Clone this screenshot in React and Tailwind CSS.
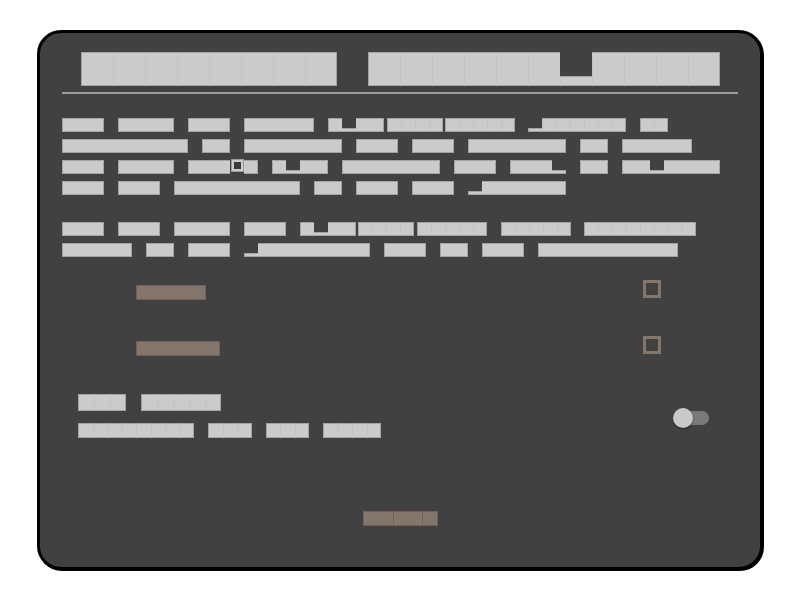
import clsx from "clsx";

// cell sizes for each "redacted" text style
const sizes = {
  sm: { cell: "w-[14px]", full: "h-[14px]", low: "h-[4px]", row: "h-[14px]" },
  md: { cell: "w-[16px]", full: "h-[17px]", low: "h-[5px]", row: "h-[17px]" },
  sub: { cell: "w-[14.5px]", full: "h-[15px]", low: "h-[4px]", row: "h-[15px]" },
  lg: { cell: "w-[32px]", full: "h-[34px]", low: "h-[10px]", row: "h-[34px]" },
};

const Cell = ({ c, size, first, last, divider }) => {
  const s = sizes[size];
  if (c === "B") {
    return (
      <div className={clsx(s.cell, s.full, "flex justify-center")}>
        <div className="w-[11px] h-[11px] border-2 border-[#cbcbcb] bg-[#3a3a3a] shadow-[0_0_0_1px_#9c9c9c]"></div>
      </div>
    );
  }
  return (
    <div
      className={clsx(
        s.cell,
        c === "L" ? s.low : s.full,
        "bg-[#cbcbcb] border-y border-[#a4a4a4]",
        first && "border-l",
        last && "border-r",
        divider && "border-l border-l-[#c2c2c2]"
      )}
    ></div>
  );
};

const Word = ({ p, d, size = "sm", className }) => (
  <div className={clsx("flex items-end", sizes[size].row, className)}>
    {p.split("").map((c, i) => (
      <Cell
        key={i}
        c={c}
        size={size}
        first={i === 0}
        last={i === p.length - 1}
        divider={d && i > 0}
      />
    ))}
  </div>
);

const Line = ({ children }) => <div className="flex items-end h-[14px]">{children}</div>;

const BrownBar = ({ className }) => (
  <div className={clsx("h-[15px] bg-[#85766c] border border-[#6e625a]", className)}></div>
);

const Checkbox = () => <div className="w-[18px] h-[18px] border-[3px] border-[#85766c]"></div>;

const Toggle = () => (
  <div className="relative w-[36px] h-[20px]">
    <div className="absolute left-[10px] top-[3px] w-[26px] h-[14px] rounded-full bg-[#7a7a7a]"></div>
    <div className="absolute left-0 top-0 w-[20px] h-[20px] rounded-full bg-[#c9c9c9] shadow-[0_1px_2px_rgba(0,0,0,0.5)]"></div>
  </div>
);

export default function App() {
  return (
    <div className="w-[800px] h-[600px] bg-white flex items-center justify-center">
      <div className="w-[726px] h-[540px] border-[3px] border-black rounded-[24px] bg-[#414141] shadow-[1px_1px_0_#000] flex flex-col pt-[19px] px-[22px]">
        {/* title */}
        <div className="flex justify-center gap-[31px]">
          <Word size="lg" d p="FFFFFFFF" />
          <Word size="lg" d p="FFFFFFLFFFF" />
        </div>
        <div className="mt-[6px] h-[2px] bg-[#9b9b9b]"></div>

        {/* first paragraph */}
        <div className="mt-[24px] flex flex-col gap-[7px]">
          <Line>
            <Word p="FFF" />
            <Word p="FFFF" className="ml-[14px]" />
            <Word p="FFF" className="ml-[14px]" />
            <Word p="FFFFF" className="ml-[14px]" />
            <Word p="FLFF" className="ml-[14px]" />
            <Word p="FFFF" d className="ml-[3px]" />
            <Word p="FFFFF" d className="ml-[2px]" />
            <Word p="LFFFFFF" d className="ml-[13px]" />
            <Word p="FF" d className="ml-[14px]" />
          </Line>
          <Line>
            <Word p="FFFFFFFFF" />
            <Word p="FF" className="ml-[14px]" />
            <Word p="FFFFFFF" className="ml-[14px]" />
            <Word p="FFF" className="ml-[14px]" />
            <Word p="FFF" className="ml-[14px]" />
            <Word p="FFFFFFF" className="ml-[14px]" />
            <Word p="FF" className="ml-[14px]" />
            <Word p="FFFFF" className="ml-[14px]" />
          </Line>
          <Line>
            <Word p="FFF" />
            <Word p="FFFF" className="ml-[14px]" />
            <Word p="FFFBF" className="ml-[14px]" />
            <Word p="FLFF" className="ml-[14px]" />
            <Word p="FFFFFFF" className="ml-[14px]" />
            <Word p="FFF" className="ml-[14px]" />
            <Word p="FFFL" className="ml-[14px]" />
            <Word p="FF" className="ml-[14px]" />
            <Word p="FFLFFFF" className="ml-[14px]" />
          </Line>
          <Line>
            <Word p="FFF" />
            <Word p="FFF" className="ml-[14px]" />
            <Word p="FFFFFFFFF" className="ml-[14px]" />
            <Word p="FF" className="ml-[14px]" />
            <Word p="FFF" className="ml-[14px]" />
            <Word p="FFF" className="ml-[14px]" />
            <Word p="LFFFFFF" className="ml-[14px]" />
          </Line>
        </div>

        {/* second paragraph */}
        <div className="mt-[27px] flex flex-col gap-[7px]">
          <Line>
            <Word p="FFF" />
            <Word p="FFF" className="ml-[14px]" />
            <Word p="FFFF" className="ml-[14px]" />
            <Word p="FFF" className="ml-[14px]" />
            <Word p="FLFF" className="ml-[14px]" />
            <Word p="FFFF" d className="ml-[2px]" />
            <Word p="FFFFF" d className="ml-[3px]" />
            <Word p="FFFFF" d className="ml-[14px]" />
            <Word p="FFFFFFFF" d className="ml-[13px]" />
          </Line>
          <Line>
            <Word p="FFFFF" />
            <Word p="FF" className="ml-[14px]" />
            <Word p="FFF" className="ml-[14px]" />
            <Word p="LFFFFFFFF" className="ml-[14px]" />
            <Word p="FFF" className="ml-[14px]" />
            <Word p="FF" className="ml-[14px]" />
            <Word p="FFF" className="ml-[14px]" />
            <Word p="FFFFFFFFFF" className="ml-[14px]" />
          </Line>
        </div>

        {/* options */}
        <div className="mt-[23px] flex items-start justify-between">
          <div className="pl-[74px] pt-[5px]">
            <BrownBar className="w-[70px]" />
          </div>
          <div className="mr-[77px]">
            <Checkbox />
          </div>
        </div>
        <div className="mt-[36px] flex items-start justify-between">
          <div className="pl-[74px] pt-[5px]">
            <BrownBar className="w-[84px]" />
          </div>
          <div className="mr-[77px]">
            <Checkbox />
          </div>
        </div>

        {/* switch setting */}
        <div className="mt-[38px] flex items-start justify-between">
          <div className="pl-[16px] flex flex-col">
            <div className="flex">
              <Word size="md" d p="FFF" />
              <Word size="md" d p="FFFFF" className="ml-[15px]" />
            </div>
            <div className="flex mt-[12px]">
              <Word size="sub" d p="FFFFFFFF" />
              <Word size="sub" d p="FFF" className="ml-[14px]" />
              <Word size="sub" d p="FFF" className="ml-[14px]" />
              <Word size="sub" d p="FFFF" className="ml-[14px]" />
            </div>
          </div>
          <div className="mt-[14px] mr-[29px]">
            <Toggle />
          </div>
        </div>

        {/* action */}
        <div className="mt-[73px] flex justify-center">
          <div className="flex h-[15px] border border-[#6e625a] bg-[#85766c]">
            <div className="w-[29px]"></div>
            <div className="w-[29px] border-l border-[#6e625a]"></div>
            <div className="w-[15px] border-l border-[#6e625a]"></div>
          </div>
        </div>
      </div>
    </div>
  );
}
